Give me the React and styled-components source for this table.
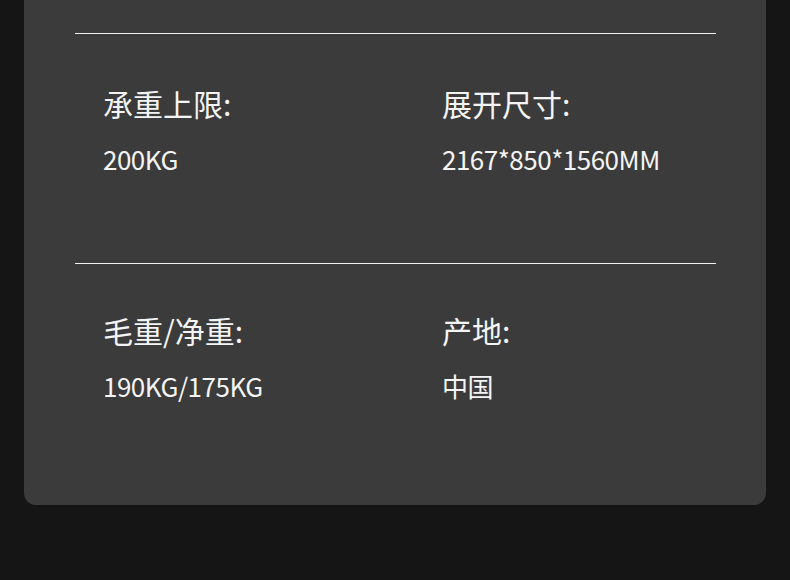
import React from 'react';
import styled, { createGlobalStyle } from 'styled-components';

const GlobalStyle = createGlobalStyle`
  html, body {
    margin: 0;
    padding: 0;
    background: #151515;
  }
  body {
    font-family: "Noto Sans CJK SC", "Noto Sans", sans-serif;
    color: #f4f4f4;
  }
`;

const Page = styled.div`
  width: 790px;
  height: 580px;
  padding: 0 24px;
  box-sizing: border-box;
  overflow: hidden;
`;

const Card = styled.div`
  background: #3b3b3b;
  border-radius: 0 0 12px 12px;
  padding: 33px 50px 12px 51px;
`;

const Section = styled.div`
  border-top: 1px solid #f0f0f0;
  display: grid;
  grid-template-columns: 339px 1fr;
  padding: ${(p) => (p.$last ? '50px 0 92px 28px' : '53px 0 89px 28px')};
`;

const Spec = styled.div`
  display: flex;
  flex-direction: column;
`;

const Label = styled.div`
  font-size: 30px;
  line-height: 32px;
`;

const Value = styled.div`
  margin-top: 25px;
  font-size: 26px;
  line-height: 30px;
  letter-spacing: -0.5px;
`;

const rows = [
  [
    { label: '承重上限:', value: '200KG' },
    { label: '展开尺寸:', value: '2167*850*1560MM' },
  ],
  [
    { label: '毛重/净重:', value: '190KG/175KG' },
    { label: '产地:', value: '中国' },
  ],
];

export default function App() {
  return (
    <Page>
      <GlobalStyle />
      <Card>
        {rows.map((row, i) => (
          <Section key={i} $last={i === rows.length - 1}>
            {row.map((item) => (
              <Spec key={item.label}>
                <Label>{item.label}</Label>
                <Value>{item.value}</Value>
              </Spec>
            ))}
          </Section>
        ))}
      </Card>
    </Page>
  );
}
